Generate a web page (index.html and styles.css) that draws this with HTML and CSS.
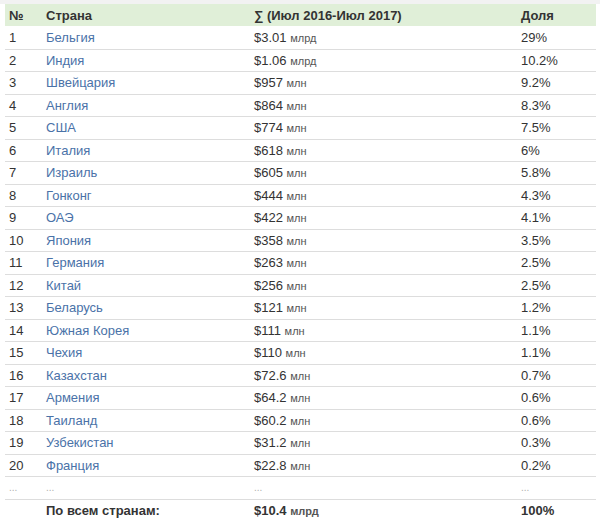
FILE: index.html
```html
<!DOCTYPE html>
<html lang="ru">
<head>
<meta charset="utf-8">
<title>Страны</title>
<link rel="stylesheet" href="styles.css">
</head>
<body>
<div class="topstrip"></div>
<table class="tbl">
<colgroup><col class="c1"><col class="c2"><col class="c3"><col class="c4"></colgroup>
<thead>
<tr><th>№</th><th>Страна</th><th>∑ (Июл 2016-Июл 2017)</th><th>Доля</th></tr>
</thead>
<tbody>
<tr><td>1</td><td><a href="#">Бельгия</a></td><td>$3.01 <span class="u">млрд</span></td><td>29%</td></tr>
<tr><td>2</td><td><a href="#">Индия</a></td><td>$1.06 <span class="u">млрд</span></td><td>10.2%</td></tr>
<tr><td>3</td><td><a href="#">Швейцария</a></td><td>$957 <span class="u">млн</span></td><td>9.2%</td></tr>
<tr><td>4</td><td><a href="#">Англия</a></td><td>$864 <span class="u">млн</span></td><td>8.3%</td></tr>
<tr><td>5</td><td><a href="#">США</a></td><td>$774 <span class="u">млн</span></td><td>7.5%</td></tr>
<tr><td>6</td><td><a href="#">Италия</a></td><td>$618 <span class="u">млн</span></td><td>6%</td></tr>
<tr><td>7</td><td><a href="#">Израиль</a></td><td>$605 <span class="u">млн</span></td><td>5.8%</td></tr>
<tr><td>8</td><td><a href="#">Гонконг</a></td><td>$444 <span class="u">млн</span></td><td>4.3%</td></tr>
<tr><td>9</td><td><a href="#">ОАЭ</a></td><td>$422 <span class="u">млн</span></td><td>4.1%</td></tr>
<tr><td>10</td><td><a href="#">Япония</a></td><td>$358 <span class="u">млн</span></td><td>3.5%</td></tr>
<tr><td>11</td><td><a href="#">Германия</a></td><td>$263 <span class="u">млн</span></td><td>2.5%</td></tr>
<tr><td>12</td><td><a href="#">Китай</a></td><td>$256 <span class="u">млн</span></td><td>2.5%</td></tr>
<tr><td>13</td><td><a href="#">Беларусь</a></td><td>$121 <span class="u">млн</span></td><td>1.2%</td></tr>
<tr><td>14</td><td><a href="#">Южная Корея</a></td><td>$111 <span class="u">млн</span></td><td>1.1%</td></tr>
<tr><td>15</td><td><a href="#">Чехия</a></td><td>$110 <span class="u">млн</span></td><td>1.1%</td></tr>
<tr><td>16</td><td><a href="#">Казахстан</a></td><td>$72.6 <span class="u">млн</span></td><td>0.7%</td></tr>
<tr><td>17</td><td><a href="#">Армения</a></td><td>$64.2 <span class="u">млн</span></td><td>0.6%</td></tr>
<tr><td>18</td><td><a href="#">Таиланд</a></td><td>$60.2 <span class="u">млн</span></td><td>0.6%</td></tr>
<tr><td>19</td><td><a href="#">Узбекистан</a></td><td>$31.2 <span class="u">млн</span></td><td>0.3%</td></tr>
<tr><td>20</td><td><a href="#">Франция</a></td><td>$22.8 <span class="u">млн</span></td><td>0.2%</td></tr>
<tr class="dots"><td>...</td><td>...</td><td>...</td><td>...</td></tr>
<tr class="total"><td></td><td>По всем странам:</td><td>$10.4 <span class="u">млрд</span></td><td>100%</td></tr>
</tbody>
</table>
</body>
</html>
```
FILE: styles.css
```css
html, body {
  margin: 0;
  padding: 0;
  background: #ffffff;
}
body {
  font-family: "Liberation Sans", Arial, sans-serif;
  font-size: 13px;
  color: #333333;
}
.topstrip {
  height: 4px;
  background: #f2f2f2;
}
.tbl {
  margin-left: 5px;
  width: 591px;
  border-collapse: collapse;
  table-layout: fixed;
}
.c1 { width: 37px; }
.c2 { width: 208px; }
.c3 { width: 267px; }
.c4 { width: 79px; }
.tbl th {
  background: #e0efd8;
  text-align: left;
  font-weight: bold;
  height: 22px;
  padding: 0 4px;
  color: #333333;
}
.tbl td {
  height: 21.5px;
  padding: 0 4px;
  border-top: 1px solid #dddddd;
  white-space: nowrap;
}
.tbl tbody tr:first-child td {
  border-top: none;
  height: 22.5px;
}
.tbl a {
  color: #4a72a8;
  text-decoration: none;
}
.u {
  font-size: 11px;
  color: #555555;
}
.dots td {
  color: #b0b0b0;
  font-size: 10px;
  border-bottom: 1px solid #dddddd;
}
.total td {
  font-weight: bold;
  border-top: none;
}
```
